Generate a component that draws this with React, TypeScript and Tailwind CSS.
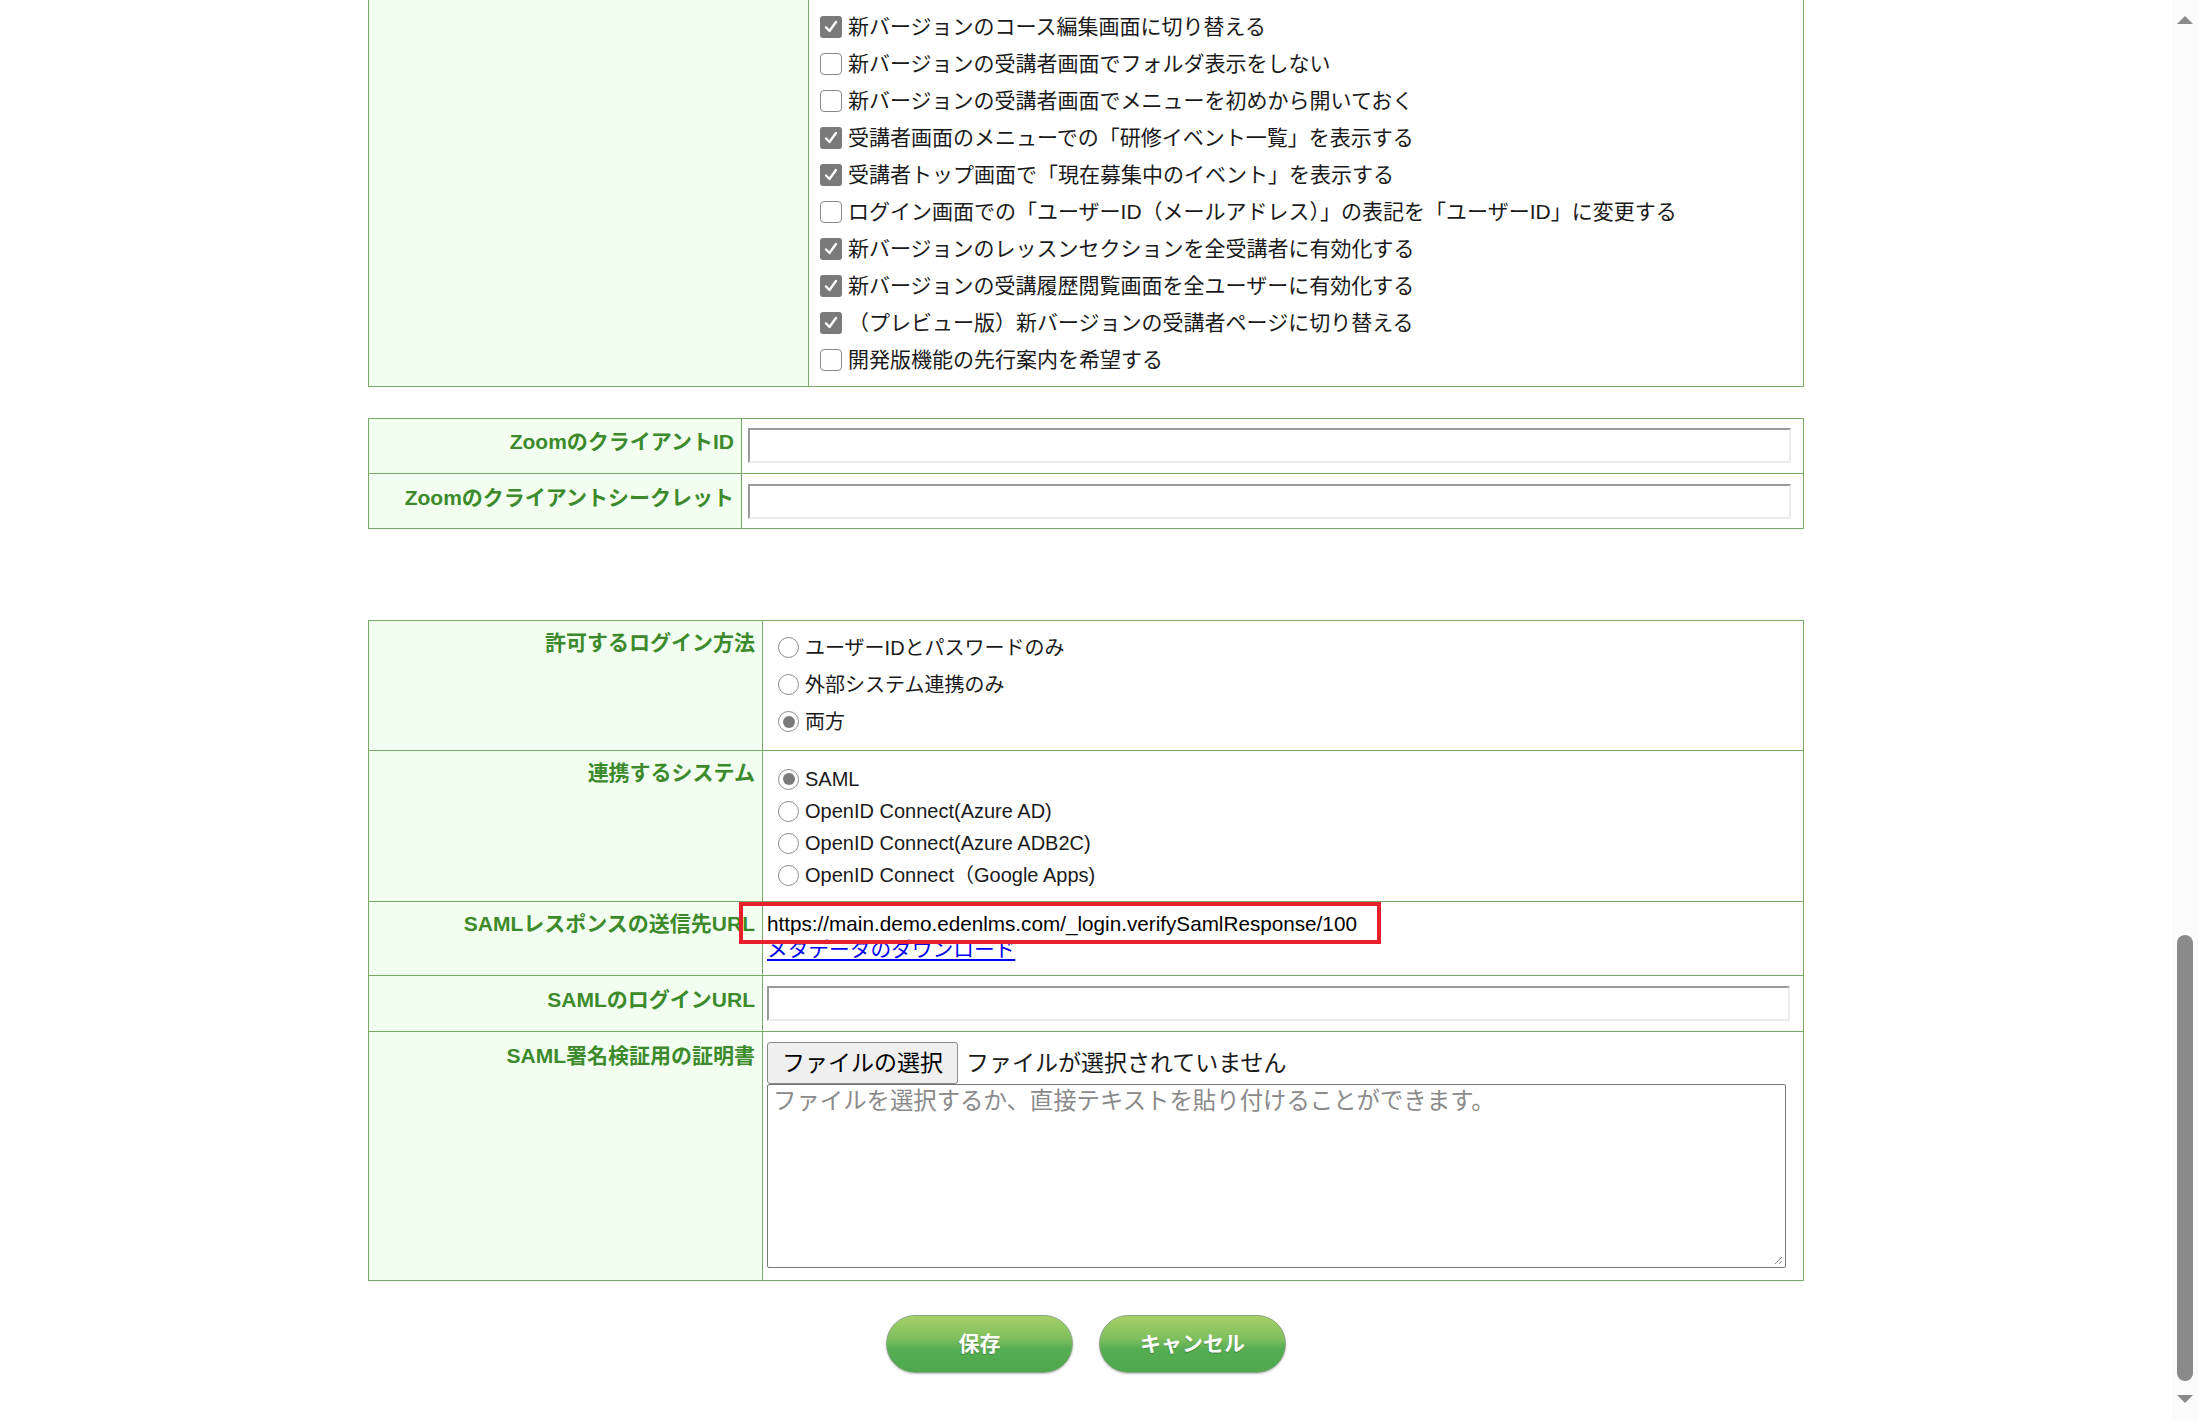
import { ReactNode } from 'react'

// Settings page fragment: feature flags, Zoom credentials and SSO settings

const font = 'font-["Liberation_Sans","Noto_Sans_CJK_JP",sans-serif]'

const flags: { label: string; checked: boolean }[] = [
  { label: '新バージョンのコース編集画面に切り替える', checked: true },
  { label: '新バージョンの受講者画面でフォルダ表示をしない', checked: false },
  { label: '新バージョンの受講者画面でメニューを初めから開いておく', checked: false },
  { label: '受講者画面のメニューでの「研修イベント一覧」を表示する', checked: true },
  { label: '受講者トップ画面で「現在募集中のイベント」を表示する', checked: true },
  { label: 'ログイン画面での「ユーザーID（メールアドレス）」の表記を「ユーザーID」に変更する', checked: false },
  { label: '新バージョンのレッスンセクションを全受講者に有効化する', checked: true },
  { label: '新バージョンの受講履歴閲覧画面を全ユーザーに有効化する', checked: true },
  { label: '（プレビュー版）新バージョンの受講者ページに切り替える', checked: true },
  { label: '開発版機能の先行案内を希望する', checked: false },
]

function Checkbox({ checked }: { checked: boolean }) {
  if (checked) {
    return (
      <span className="flex h-[22px] w-[22px] shrink-0 items-center justify-center rounded-[3px] bg-[#7a7a7a]">
        <svg viewBox="0 0 20 20" className="h-[18px] w-[18px]">
          <path d="M4.5 10.5 L8.3 14.5 L15.5 4.5" fill="none" stroke="#fff" strokeWidth="2.6" strokeLinecap="round" strokeLinejoin="round" />
        </svg>
      </span>
    )
  }
  return <span className="h-[22px] w-[22px] shrink-0 rounded-[4px] border-[1.5px] border-[#8a8a8a] bg-white" />
}

function Radio({ checked }: { checked: boolean }) {
  return (
    <span className="flex h-[21px] w-[21px] shrink-0 items-center justify-center rounded-full border-[1.5px] border-[#8a8a8a] bg-white">
      {checked && <span className="h-[12px] w-[12px] rounded-full bg-[#7a7a7a]" />}
    </span>
  )
}

function Label({ children, className = '' }: { children: ReactNode; className?: string }) {
  return (
    <div className={`border-r border-[#7aaa68] bg-[#f2fff0] pr-[7px] text-right text-[21px] leading-[28px] font-bold text-[#3d8a2c] ${className}`}>
      {children}
    </div>
  )
}

function TextInput() {
  return (
    <div className="h-[35px] w-full border-2 border-t-[#9a9a9a] border-l-[#9a9a9a] border-r-[#ececec] border-b-[#ececec] bg-white" />
  )
}

function GreenButton({ children }: { children: ReactNode }) {
  return (
    <button className="flex h-[58px] w-[187px] items-center justify-center rounded-full border border-[#8aa382] bg-[linear-gradient(#a6d066_0%,#7fbf5e_40%,#55ad52_60%,#4ea84f_100%)] text-[21px] font-bold text-white shadow-[0_1px_2px_rgba(0,0,0,0.25)] [text-shadow:0_1px_1px_rgba(0,0,0,0.25)]">
      {children}
    </button>
  )
}

function Scrollbar() {
  return (
    <div className="flex h-full w-[26px] shrink-0 flex-col items-center bg-[#fbfbfb]">
      <svg viewBox="0 0 16 8" className="mt-[16px] h-[8px] w-[16px]">
        <path d="M0 8 L8 0 L16 8 Z" fill="#8a8a8a" />
      </svg>
      <div className="mt-[911px] h-[446px] w-[16px] rounded-full bg-[#8a8a8a]" />
      <svg viewBox="0 0 16 8" className="mt-[14px] h-[8px] w-[16px]">
        <path d="M0 0 L16 0 L8 8 Z" fill="#8a8a8a" />
      </svg>
    </div>
  )
}

export default function App() {
  const loginMethods = ['ユーザーIDとパスワードのみ', '外部システム連携のみ', '両方']
  const systems = ['SAML', 'OpenID Connect(Azure AD)', 'OpenID Connect(Azure ADB2C)', 'OpenID Connect（Google Apps)']

  return (
    <div className={`flex h-[1421px] w-[2198px] overflow-hidden bg-white text-[#1a1a1a] ${font}`}>
      <div className="flex-1">
        <div className="mx-auto w-[1436px]">
          {/* feature flags */}
          <div className="grid grid-cols-[440px_1fr] border-x border-b border-[#7aaa68]">
            <div className="border-r border-[#7aaa68] bg-[#f2fff0]" />
            <div className="py-[8px] pl-[11px]">
              {flags.map((f) => (
                <div key={f.label} className="flex h-[37px] items-center gap-[6px] text-[21px]">
                  <Checkbox checked={f.checked} />
                  <span>{f.label}</span>
                </div>
              ))}
            </div>
          </div>

          {/* zoom */}
          <div className="mt-[31px] grid grid-cols-[373px_1fr] border border-[#7aaa68]">
            <Label className="h-[54px] pt-[9px]">Zoomのクライアント<span>ID</span></Label>
            <div className="pt-[9px] pr-[12px] pl-[6px]">
              <TextInput />
            </div>
            <Label className="h-[55px] border-t pt-[10px]">Zoomのクライアントシークレット</Label>
            <div className="border-t border-[#7aaa68] pt-[10px] pr-[12px] pl-[6px]">
              <TextInput />
            </div>
          </div>

          {/* login settings */}
          <div className="mt-[91px] grid grid-cols-[394px_1fr] border border-[#7aaa68]">
            <Label className="h-[129px] pt-[8px]">許可するログイン方法</Label>
            <div className="pt-[8px] pl-[15px]">
              {loginMethods.map((m, i) => (
                <div key={m} className="flex h-[37px] items-center gap-[6px] text-[20px]">
                  <Radio checked={i === 2} />
                  <span>{m}</span>
                </div>
              ))}
            </div>

            <Label className="h-[151px] border-t pt-[8px]">連携するシステム</Label>
            <div className="border-t border-[#7aaa68] pt-[12px] pl-[15px]">
              {systems.map((s, i) => (
                <div key={s} className="flex h-[32px] items-center gap-[6px] text-[20px]">
                  <Radio checked={i === 0} />
                  <span>{s}</span>
                </div>
              ))}
            </div>

            <Label className="h-[74px] border-t pt-[8px]">SAMLレスポンスの送信先URL</Label>
            <div className="relative border-t border-[#7aaa68] pt-[9px] pl-[4px] text-[20.7px] leading-[26px]">
              <div className="text-black">https://main.demo.edenlms.com/_login.verifySamlResponse/100</div>
              <a href="#" className="text-[#0000ee] underline">メタデータのダウンロード</a>
              <div className="absolute top-0 left-[-24px] h-[42px] w-[642px] border-[4px] border-[#e8202c]" />
            </div>

            <Label className="h-[56px] border-t pt-[10px]">SAMLのログインURL</Label>
            <div className="border-t border-[#7aaa68] pt-[10px] pr-[13px] pl-[4px]">
              <TextInput />
            </div>

            <Label className="h-[249px] border-t pt-[10px]">SAML署名検証用の証明書</Label>
            <div className="border-t border-[#7aaa68] pt-[10px] pr-[17px] pl-[4px]">
              <div className="flex items-center gap-[8px] text-[23px]">
                <button className="h-[42px] w-[191px] rounded-[3px] border border-[#8a8a8a] bg-[#efefef] text-black">ファイルの選択</button>
                <span>ファイルが選択されていません</span>
              </div>
              <div className="relative h-[184px] w-full rounded-[2px] border-[1.5px] border-[#767676] bg-white px-[5px] pt-[1px] text-[23.4px] leading-[30px] text-[#8a8a8a]">
                ファイルを選択するか、直接テキストを貼り付けることができます。
                <svg viewBox="0 0 10 10" className="absolute right-[2px] bottom-[2px] h-[10px] w-[10px]">
                  <path d="M9 2 L2 9 M9 6 L6 9" stroke="#888" strokeWidth="1" />
                </svg>
              </div>
            </div>
          </div>

          <div className="mt-[34px] flex justify-center gap-[26px]">
            <GreenButton>保存</GreenButton>
            <GreenButton>キャンセル</GreenButton>
          </div>
        </div>
      </div>
      <Scrollbar />
    </div>
  )
}
